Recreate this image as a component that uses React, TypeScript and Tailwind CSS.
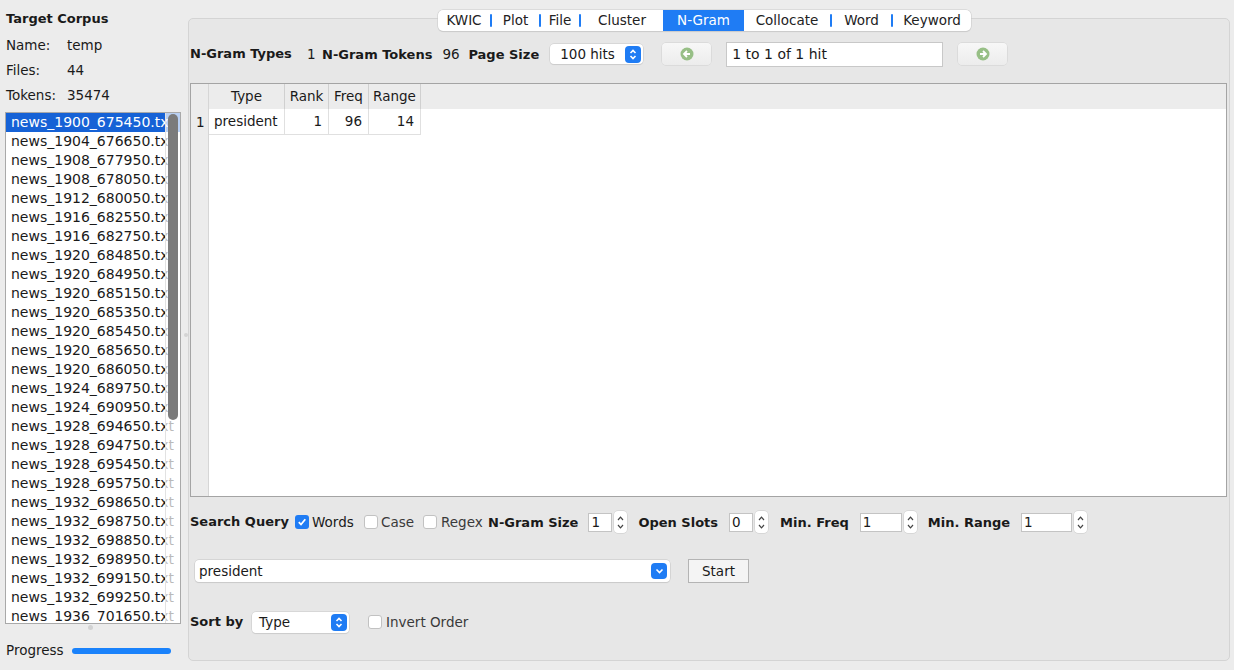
import React from 'react'

const files = [
  'news_1900_675450.txt',
  'news_1904_676650.txt',
  'news_1908_677950.txt',
  'news_1908_678050.txt',
  'news_1912_680050.txt',
  'news_1916_682550.txt',
  'news_1916_682750.txt',
  'news_1920_684850.txt',
  'news_1920_684950.txt',
  'news_1920_685150.txt',
  'news_1920_685350.txt',
  'news_1920_685450.txt',
  'news_1920_685650.txt',
  'news_1920_686050.txt',
  'news_1924_689750.txt',
  'news_1924_690950.txt',
  'news_1928_694650.txt',
  'news_1928_694750.txt',
  'news_1928_695450.txt',
  'news_1928_695750.txt',
  'news_1932_698650.txt',
  'news_1932_698750.txt',
  'news_1932_698850.txt',
  'news_1932_698950.txt',
  'news_1932_699150.txt',
  'news_1932_699250.txt',
  'news_1936_701650.txt',
]

const tabs: [string, string][] = [
  ['KWIC', 'w-[52px]'],
  ['Plot', 'w-[47px]'],
  ['File', 'w-[38px]'],
  ['Cluster', 'w-[82px]'],
  ['N-Gram', 'w-[81px]'],
  ['Collocate', 'w-[86px]'],
  ['Word', 'w-[59px]'],
  ['Keyword', 'w-[78px]'],
]

const Label = ({ children, w }: { children: React.ReactNode; w: string }) => (
  <span className={`${w} shrink-0 whitespace-nowrap font-bold text-[13px]`}>{children}</span>
)

const BlueStepper = () => (
  <div className="w-[16px] h-[17px] rounded-[4px] bg-[#1f7cf4] flex items-center justify-center">
    <svg width="8" height="11" viewBox="0 0 8 11" fill="none" stroke="white" strokeWidth="1.6">
      <path d="M1.5 4 L4 1.5 L6.5 4" />
      <path d="M1.5 7 L4 9.5 L6.5 7" />
    </svg>
  </div>
)

const Spinner = () => (
  <div className="w-[13px] h-[22px] rounded-[4px] bg-white shadow-[0_0_0_0.5px_#c8c8c8] flex flex-col items-center justify-center gap-[3px]">
    <svg width="7" height="5" viewBox="0 0 7 5" fill="none" stroke="#444" strokeWidth="1.2">
      <path d="M1 4 L3.5 1.2 L6 4" />
    </svg>
    <svg width="7" height="5" viewBox="0 0 7 5" fill="none" stroke="#444" strokeWidth="1.2">
      <path d="M1 1 L3.5 3.8 L6 1" />
    </svg>
  </div>
)

const NumField = ({ value, w }: { value: string; w: string }) => (
  <div className="flex items-center gap-[2px]">
    <div className={`${w} h-[19px] bg-white border border-[#c4c4c4] flex items-center pl-[2px]`}>
      {value}
    </div>
    <Spinner />
  </div>
)

const Checkbox = ({ checked }: { checked?: boolean }) =>
  checked ? (
    <div className="w-[14px] h-[14px] shrink-0 rounded-[3px] bg-[#1f7cf4] flex items-center justify-center">
      <svg width="10" height="10" viewBox="0 0 10 10" fill="none" stroke="white" strokeWidth="1.8">
        <path d="M1.8 5.2 L4 7.5 L8.3 2.2" />
      </svg>
    </div>
  ) : (
    <div className="w-[14px] h-[14px] shrink-0 rounded-[3px] bg-white border border-[#c2c2c2]" />
  )

const ArrowButton = ({ dir }: { dir: 'left' | 'right' }) => (
  <div className="w-[49px] h-[22px] rounded-[4px] bg-gradient-to-b from-[#f7f7f7] to-[#ececec] shadow-[0_0_0_0.5px_#d0d0d0] flex items-center justify-center">
    <svg width="14" height="14" viewBox="0 0 14 14">
      <circle cx="7" cy="7" r="6.5" fill="#97bf86" />
      {dir === 'left' ? (
        <path d="M10 7 H4.5 M7 4 L4 7 L7 10" stroke="white" strokeWidth="1.8" fill="none" />
      ) : (
        <path d="M4 7 H9.5 M7 4 L10 7 L7 10" stroke="white" strokeWidth="1.8" fill="none" />
      )}
    </svg>
  </div>
)

export default function App() {
  return (
    <div className="w-[1234px] h-[670px] flex bg-[#ececec] text-[13.5px] text-[#1a1a1a] font-['DejaVu_Sans',sans-serif] overflow-hidden">
      {/* left: target corpus */}
      <div className="w-[183px] shrink-0 flex flex-col pl-[5px]">
        <div className="h-[33px] flex items-center pl-[1px] pt-[5px] font-bold text-[13px]">Target Corpus</div>
        <div className="h-[25px] flex items-center pl-[1px]">
          <span className="w-[61px]">Name:</span>
          <span>temp</span>
        </div>
        <div className="h-[25px] flex items-center pl-[1px]">
          <span className="w-[61px]">Files:</span>
          <span>44</span>
        </div>
        <div className="h-[25px] flex items-center pl-[1px]">
          <span className="w-[61px]">Tokens:</span>
          <span>35474</span>
        </div>
        <div className="mt-[4px] w-[176px] h-[512px] border border-[#a9a9a9] bg-white relative overflow-hidden text-[14px]">
          {files.map((f, i) => (
            <div
              key={f}
              className={`h-[19px] flex items-center pl-[5px] whitespace-nowrap ${
                i === 0 ? 'bg-[#1662d6] text-white' : ''
              }`}
            >
              {f}
            </div>
          ))}
          <div className="absolute top-0 right-0 w-[15px] h-full bg-white/70 border-l border-[#e2e2e2]">
            <div className="mx-auto mt-[1px] w-[10px] h-[306px] rounded-full bg-[#7b7b7b]" />
          </div>
        </div>
        <div className="h-[8px] flex justify-center pr-[8px]">
          <div className="w-[5px] h-[5px] rounded-full bg-[#d2d2d2] mt-[1px]" />
        </div>
        <div className="flex-1 flex items-center pl-[1px] pb-[1px]">
          <span className="w-[66px]">Progress</span>
          <div className="w-[99px] h-[6px] rounded-full bg-[#1a82fb]" />
        </div>
      </div>

      {/* splitter */}
      <div className="w-[5px] shrink-0 flex items-center justify-center">
        <div className="w-[4px] h-[4px] rounded-full bg-[#d4d4d4]" />
      </div>

      {/* right: ngram panel */}
      <div className="flex-1 pt-[18px] pr-[4px] pb-[9px]">
        <div className="relative h-full rounded-[5px] border border-[#d4d4d4] bg-[#e7e7e7] pl-[1px] pr-[2px]">
          {/* tabs */}
          <div className="absolute left-[249px] top-[-9px] h-[21px] flex items-center rounded-[5px] bg-white shadow-[0_0_0_0.5px_#c9c9c9,0_1px_1px_rgba(0,0,0,0.12)] overflow-hidden">
            {tabs.map(([t, w], i) => {
              const active = t === 'N-Gram'
              const prevActive = i > 0 && tabs[i - 1][0] === 'N-Gram'
              return (
                <div key={t} className="flex items-center h-full">
                  {i > 0 && !active && !prevActive && <div className="w-[2px] h-[13px] bg-[#1f7cf4] rounded-full" />}
                  <div
                    className={`${w} h-full flex items-center justify-center ${
                      active ? 'bg-[#1f7cf4] text-white' : 'text-[#222]'
                    }`}
                  >
                    {t}
                  </div>
                </div>
              )
            })}
          </div>

          {/* stats row */}
          <div className="mt-[22px] h-[26px] flex items-center">
            <Label w="w-[106px]">N-Gram Types</Label>
            <span className="ml-[11px] w-[8px]">1</span>
            <span className="ml-[7px]"><Label w="w-[114px]">N-Gram Tokens</Label></span>
            <span className="ml-[10px] w-[17px] whitespace-nowrap">96</span>
            <span className="ml-[9px]"><Label w="w-[67px]">Page Size</Label></span>
            <div className="ml-[11px] w-[93px] h-[20px] rounded-[4px] bg-white shadow-[0_0_0_0.5px_#c8c8c8,0_1px_1px_rgba(0,0,0,0.1)] flex items-center justify-between pl-[10px] pr-[2px]">
              <span>100 hits</span>
              <BlueStepper />
            </div>
            <div className="ml-[19px]">
              <ArrowButton dir="left" />
            </div>
            <div className="ml-[15px] w-[217px] h-[25px] bg-white border border-[#c8c8c8] flex items-center pl-[5px] text-[14px]">
              1 to 1 of 1 hit
            </div>
            <div className="ml-[15px]">
              <ArrowButton dir="right" />
            </div>
          </div>

          {/* table */}
          <div className="mt-[16px] h-[414px] border border-[#a4a4a4] bg-white flex">
            <div className="w-[18px] shrink-0 bg-[#ececec] border-r border-[#d6d6d6] flex flex-col">
              <div className="h-[25px]" />
              <div className="h-[26px] flex items-center pl-[5px]">1</div>
            </div>
            <div className="flex-1 flex flex-col">
              <div className="h-[25px] bg-[#ececec] flex">
                <div className="w-[76px] border-r border-[#d0d0d0] flex items-center justify-center">Type</div>
                <div className="w-[44px] border-r border-[#d0d0d0] flex items-center justify-center">Rank</div>
                <div className="w-[40px] border-r border-[#d0d0d0] flex items-center justify-center">Freq</div>
                <div className="w-[52px] border-r border-[#d0d0d0] flex items-center justify-center">Range</div>
              </div>
              <div className="h-[26px] flex">
                <div className="w-[76px] border-r border-b border-[#e0e0e0] flex items-center pl-[5px]">president</div>
                <div className="w-[44px] border-r border-b border-[#e0e0e0] flex items-center justify-end pr-[6px]">1</div>
                <div className="w-[40px] border-r border-b border-[#e0e0e0] flex items-center justify-end pr-[6px]">96</div>
                <div className="w-[52px] border-r border-b border-[#e0e0e0] flex items-center justify-end pr-[6px]">14</div>
              </div>
            </div>
          </div>

          {/* search query row */}
          <div className="mt-[13px] h-[24px] flex items-center">
            <Label w="w-[95px]">Search Query</Label>
            <div className="ml-[10px]"><Checkbox checked /></div>
            <span className="ml-[3px] w-[41px]">Words</span>
            <div className="ml-[11px]"><Checkbox /></div>
            <span className="ml-[3px] w-[32px] text-[#3a3a3a]">Case</span>
            <div className="ml-[10px]"><Checkbox /></div>
            <span className="ml-[4px] w-[40px] text-[#3a3a3a]">Regex</span>
            <span className="ml-[7px]"><Label w="w-[92px]">N-Gram Size</Label></span>
            <div className="ml-[10px]"><NumField value="1" w="w-[24px]" /></div>
            <span className="ml-[11px]"><Label w="w-[76px]">Open Slots</Label></span>
            <div className="ml-[11px]"><NumField value="0" w="w-[24px]" /></div>
            <span className="ml-[12px]"><Label w="w-[66px]">Min. Freq</Label></span>
            <div className="ml-[11px]"><NumField value="1" w="w-[42px]" /></div>
            <span className="ml-[11px]"><Label w="w-[78px]">Min. Range</Label></span>
            <div className="ml-[11px]"><NumField value="1" w="w-[51px]" /></div>
          </div>

          {/* query combo */}
          <div className="mt-[25px] h-[24px] flex items-center pl-[5px]">
            <div className="w-[475px] h-[22px] rounded-[4px] bg-white shadow-[0_0_0_0.5px_#c4c4c4,0_1px_1px_rgba(0,0,0,0.1)] flex items-center justify-between pl-[4px] pr-[3px]">
              <span>president</span>
              <div className="w-[16px] h-[16px] rounded-[4px] bg-[#1f7cf4] flex items-center justify-center">
                <svg width="9" height="6" viewBox="0 0 9 6" fill="none" stroke="white" strokeWidth="1.6">
                  <path d="M1.5 1.5 L4.5 4.5 L7.5 1.5" />
                </svg>
              </div>
            </div>
            <div className="ml-[18px] w-[61px] h-[24px] bg-[#f4f4f4] border border-[#b4b4b4] flex items-center justify-center">
              Start
            </div>
          </div>

          {/* sort row */}
          <div className="mt-[27px] h-[24px] flex items-center">
            <Label w="w-[51px]">Sort by</Label>
            <div className="ml-[11px] w-[97px] h-[21px] rounded-[4px] bg-white shadow-[0_0_0_0.5px_#c8c8c8,0_1px_1px_rgba(0,0,0,0.1)] flex items-center justify-between pl-[7px] pr-[2px]">
              <span>Type</span>
              <BlueStepper />
            </div>
            <div className="ml-[19px]"><Checkbox /></div>
            <span className="ml-[4px] text-[#3a3a3a]">Invert Order</span>
          </div>
        </div>
      </div>
    </div>
  )
}
